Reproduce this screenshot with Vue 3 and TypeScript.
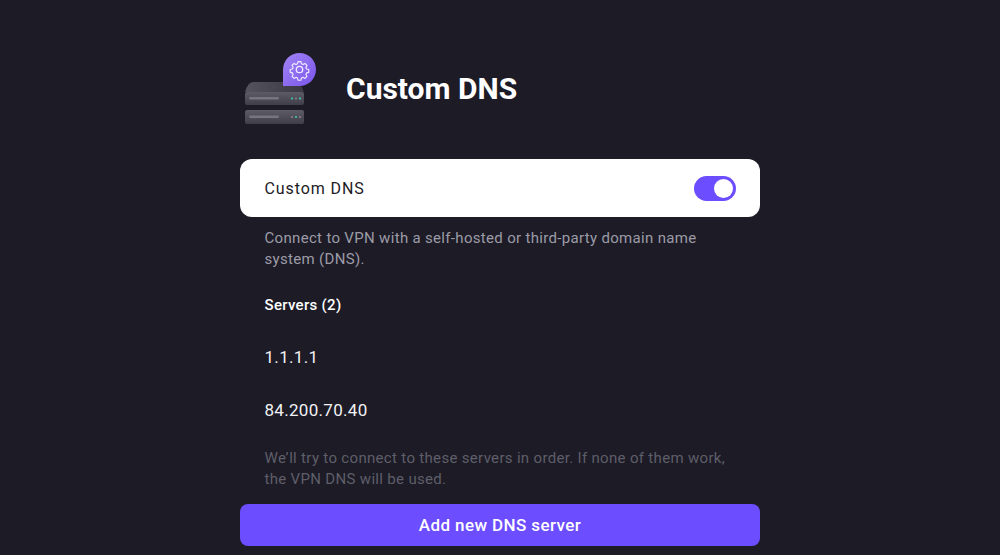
<script setup lang="ts">
const servers: string[] = ['1.1.1.1', '84.200.70.40']
</script>

<template>
  <main class="page">
    <section class="panel">
      <header class="head">
        <svg class="logo" width="80" height="80" viewBox="0 0 80 80" aria-hidden="true">
          <defs>
            <linearGradient id="top" x1="0" y1="0" x2="1" y2="0">
              <stop offset="0" stop-color="#55545e" />
              <stop offset="1" stop-color="#3a3943" />
            </linearGradient>
            <linearGradient id="front" x1="0" y1="0" x2="0" y2="1">
              <stop offset="0" stop-color="#5d5c66" />
              <stop offset="1" stop-color="#403f49" />
            </linearGradient>
            <linearGradient id="bubble" x1="0" y1="0" x2="1" y2="1">
              <stop offset="0" stop-color="#a184f5" />
              <stop offset="1" stop-color="#7a55ea" />
            </linearGradient>
          </defs>
          <path d="M5 43 Q8 33 13 33 H56 Q60 33 64 43 Z" fill="url(#top)" />
          <rect x="5" y="43" width="59" height="13" rx="2" fill="url(#front)" />
          <rect x="9" y="48" width="30" height="2.4" rx="1.2" fill="#77767f" />
          <circle cx="52" cy="49.5" r="1" fill="#3fd3bd" />
          <circle cx="56" cy="49.5" r="1" fill="#8b8a93" />
          <circle cx="60" cy="49.5" r="1" fill="#3fd3bd" />
          <rect x="5" y="61" width="59" height="14" rx="2" fill="url(#front)" />
          <rect x="9" y="66.6" width="30" height="2.4" rx="1.2" fill="#77767f" />
          <circle cx="52" cy="68" r="1" fill="#8b8a93" />
          <circle cx="56" cy="68" r="1" fill="#3fd3bd" />
          <circle cx="60" cy="68" r="1" fill="#8b8a93" />
          <path d="M59.5 4 A16.5 16.5 0 1 1 59.5 37 H43 V20.5 A16.5 16.5 0 0 1 59.5 4 Z" fill="url(#bubble)" />
          <g fill="none" stroke="#f0ebff" stroke-width="1.3" stroke-linejoin="round" transform="translate(.5 5)">
            <circle cx="59" cy="15.5" r="3.2" />
            <path d="M57.4 6.8 h3.2 l.6 2.4 1.7 .8 2.2 -1.2 2.2 2.2 -1.2 2.2 .8 1.7 2.4 .6 v3.2 l-2.4 .6 -.8 1.7 1.2 2.2 -2.2 2.2 -2.2 -1.2 -1.7 .8 -.6 2.4 h-3.2 l-.6 -2.4 -1.7 -.8 -2.2 1.2 -2.2 -2.2 1.2 -2.2 -.8 -1.7 -2.4 -.6 v-3.2 l2.4 -.6 .8 -1.7 -1.2 -2.2 2.2 -2.2 2.2 1.2 1.7 -.8 z" transform="translate(59 15.5) scale(.9) translate(-59 -15.5)" />
          </g>
        </svg>
        <h1 class="title">Custom DNS</h1>
      </header>

      <div class="card">
        <span class="card-label">Custom DNS</span>
        <span class="toggle"><span class="knob"></span></span>
      </div>

      <p class="hint">Connect to VPN with a self-hosted or third-party domain name system (DNS).</p>

      <h2 class="servers-title">Servers (2)</h2>

      <ul class="servers">
        <li v-for="server in servers" :key="server" class="server">{{ server }}</li>
      </ul>

      <p class="note">We’ll try to connect to these servers in order. If none of them work, the VPN DNS will be used.</p>

      <button class="add" type="button">Add new DNS server</button>
    </section>
  </main>
</template>

<style>
html, body { margin: 0; background: #1c1b26; }
</style>

<style scoped>
.page {
  width: 1000px;
  height: 555px;
  overflow: hidden;
  background: #1c1b26;
  display: flex;
  justify-content: center;
  font-family: Roboto, "Liberation Sans", sans-serif;
}
.panel { width: 520px; padding-top: 49px; display: flex; flex-direction: column; }
.head { display: flex; align-items: center; height: 80px; gap: 26px; }
.logo { flex: none; overflow: visible; }
.title { margin: 0; color: #fff; font-size: 30px; font-weight: 700; line-height: 36px; letter-spacing: 0; }
.card {
  margin-top: 30px;
  height: 58px;
  box-sizing: border-box;
  background: #fff;
  border-radius: 12px;
  padding: 0 24.5px;
  display: flex;
  align-items: center;
  justify-content: space-between;
}
.card-label { color: #1c1b26; font-size: 16px; letter-spacing: .9px; }
.toggle {
  width: 42px; height: 25px; border-radius: 13px; background: #6c4dff;
  display: flex; align-items: center; justify-content: flex-end; padding-right: 3px; box-sizing: border-box;
}
.knob { width: 19px; height: 19px; border-radius: 50%; background: #fff; }
.hint, .note { margin: 0; padding: 0 24.5px; font-size: 15px; line-height: 21px; letter-spacing: .32px; }
.hint { color: #9c9ba6; margin-top: 11px; }
.servers-title { margin: 24px 0 0; padding: 0 24.5px; color: #fff; font-size: 15px; font-weight: 500; line-height: 22px; letter-spacing: .3px; }
.servers { list-style: none; margin: 29px 0 0; padding: 0; }
.server { height: 53px; padding: 0 24.5px; color: #f2f2f4; font-size: 17px; line-height: 24px; letter-spacing: .3px; }
.note { color: #5f5e69; margin-top: -3px; }
.add {
  margin-top: 14px;
  height: 42px;
  border: 0;
  border-radius: 8px;
  background: #6c4dff;
  color: #fff;
  font: 500 17px Roboto, "Liberation Sans", sans-serif;
  letter-spacing: .4px;
}
</style>
